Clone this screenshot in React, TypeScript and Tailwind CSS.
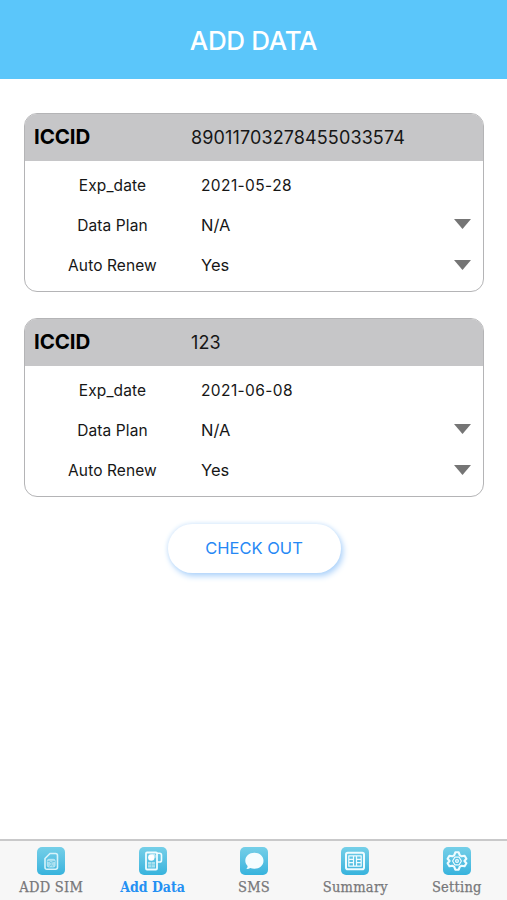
import type { ReactNode } from 'react';

const cards = [
  { iccid: '89011703278455033574', expDate: '2021-05-28', plan: 'N/A', renew: 'Yes' },
  { iccid: '123', expDate: '2021-06-08', plan: 'N/A', renew: 'Yes' },
];

function Row({ label, value, select }: { label: string; value: string; select?: boolean }) {
  return (
    <div className="flex h-[40.3px] items-center pr-3">
      <span className="w-[175px] shrink-0 text-center text-[15.5px] tracking-[0.1px]">{label}</span>
      <span className={select ? 'flex-1 pl-px text-[16.5px]' : 'flex-1 pl-px text-[15.5px] tracking-[0.4px]'}>{value}</span>
      {select && (
        <svg className="mb-[2px] h-[10px] w-[17px]" viewBox="0 0 17 10">
          <path d="M0 0h17L8.5 10z" fill="#757575" />
        </svg>
      )}
    </div>
  );
}

function SimCard({ card }: { card: (typeof cards)[number] }) {
  return (
    <section className="h-[179px] overflow-hidden rounded-[13px] border-[1.5px] border-[#b4b4b6] bg-white">
      <div className="flex h-[47px] items-center bg-[#c6c6c8] pl-[9px]">
        <h2 className="w-[157px] text-[20.5px] font-bold tracking-[-0.1px] text-black">ICCID</h2>
        <span className="text-[18px] tracking-[0.12px]">{card.iccid}</span>
      </div>
      <div className="pt-1">
        <Row label="Exp_date" value={card.expDate} />
        <Row label="Data Plan" value={card.plan} select />
        <Row label="Auto Renew" value={card.renew} select />
      </div>
    </section>
  );
}

function TabIcon({ children }: { children: ReactNode }) {
  return (
    <span className="flex size-7 rounded-[5px] bg-linear-to-b from-[#74cfe8] to-[#36b3dd]">
      <svg viewBox="0 0 28 28" className="size-7" fill="none" stroke="#effcff" strokeWidth="1.4" strokeLinejoin="round">
        {children}
      </svg>
    </span>
  );
}

const tabs = [
  {
    label: 'ADD SIM',
    icon: (
      <>
        <path d="M13 6.500h5.500q2 0 2 2v11.800q0 1.900-1.900 1.900H9.900Q8 22.200 8 20.300v-8.800z" stroke="#d8f3fa" strokeWidth="1.600" />
        <rect x="10.300" y="12.300" width="7.800" height="7.700" rx="1.500" fill="#a5deef" stroke="#c8eef8" strokeWidth="0.800" />
        <path d="M10.500 14.500h2l1.700 1.600 1.700-1.600h2M12.300 19.500l1.900-1.800 1.900 1.800" stroke="#5fc1de" strokeWidth="0.800" />
      </>
    ),
  },
  {
    label: 'Add Data',
    active: true,
    icon: (
      <>
        <rect x="7" y="5.500" width="11" height="17" rx="1" strokeWidth="1.800" />
        <path d="M18 6.200h2.500q2 0 2 2v5q0 1.800-1.800 1.800H18" strokeWidth="1.600" />
        <circle cx="12.300" cy="10.500" r="3.200" fill="#fff" stroke="none" />
        <path d="M13 7.800h3v3" strokeWidth="0.900" />
        <rect x="9" y="15" width="7" height="5.500" fill="#a9e0ef" stroke="none" />
        <path d="M9 17.700h7M12.500 15v5.500" stroke="#6bc9e3" strokeWidth="0.600" />
      </>
    ),
  },
  {
    label: 'SMS',
    icon: (
      <path
        d="M14.400 5.800c5.200 0 9.100 3.500 9.100 8s-3.900 8-9.100 8c-1.500 0-3-.3-4.200-.8-1 .8-2.200 1.100-3.800 1 1-1 1.300-2 1.200-3-1.500-1.400-2.300-3.200-2.300-5.200 0-4.500 3.900-8 9.100-8z"
        fill="#f4fdff"
        stroke="none"
      />
    ),
  },
  {
    label: 'Summary',
    icon: (
      <>
        <rect x="5" y="5.800" width="18" height="16.400" rx="1.800" strokeWidth="2" />
        <path d="M7.800 8.800h12.400v10.400H7.800zM12.500 8.800v10.400M15.500 8.800v10.400M7.800 12.300h4.700M7.800 15.700h4.700M15.500 12.300h4.700M15.500 15.700h4.700" strokeWidth="1.200" />
      </>
    ),
  },
  {
    label: 'Setting',
    icon: (
      <>
        <path
          d="M12.300 5.300h3.400l1 2.900 1.900 1.100 3-.6 1.800 3-2 2.300 2 2.300-1.800 3-3-.6-1.900 1.100-1 2.900h-3.400l-1-2.900-1.900-1.100-3 .6-1.800-3 2-2.300-2-2.300 1.800-3 3 .6 1.900-1.100z"
          strokeWidth="2.100"
        />
        <path d="M11.800 10.200h4.400l2.200 3.800-2.200 3.800h-4.400L9.600 14z" strokeWidth="1.200" />
        <circle cx="14" cy="14" r="1.400" strokeWidth="1.300" />
      </>
    ),
  },
];

export default function App() {
  return (
    <div className="flex h-screen flex-col overflow-hidden bg-white font-['Inter','Liberation_Sans',sans-serif] text-[#161616]">
      <header className="flex h-[79px] shrink-0 items-center justify-center bg-[#5bc6fa] pt-px">
        <h1 className="text-[26px] font-medium tracking-[-0.35px] text-white">ADD DATA</h1>
      </header>

      <main className="flex flex-1 flex-col items-center px-6 pt-[34px]">
        <div className="-mr-px flex w-[460px] flex-col gap-[26px]">
          {cards.map((card) => (
            <SimCard key={card.iccid} card={card} />
          ))}
        </div>
        <button className="mt-[27px] ml-px h-[49px] w-[173px] rounded-full bg-white text-[16.5px] text-[#2588f5] shadow-[2px_3px_6px_#a9d0fa,-1px_-1px_4px_#e4f0fc]">
          CHECK OUT
        </button>
      </main>

      <nav className="grid h-[61px] shrink-0 grid-cols-5 border-t-2 border-[#c9c9ca] bg-[#f7f7f7]">
        {tabs.map((tab) => (
          <div key={tab.label} className="flex flex-col items-center pt-[6px] pl-px">
            <TabIcon>{tab.icon}</TabIcon>
            <span
              className={`mt-[2px] font-['DejaVu_Serif_Condensed','DejaVu_Serif',serif] leading-5 whitespace-nowrap ${
                tab.active
                  ? 'text-[14px] font-bold text-[#2490f3]'
                  : 'text-[14.5px] tracking-[0.25px] text-[#77777a] [-webkit-text-stroke:0.25px_#77777a]'
              }`}
            >
              {tab.label}
            </span>
          </div>
        ))}
      </nav>
    </div>
  );
}
